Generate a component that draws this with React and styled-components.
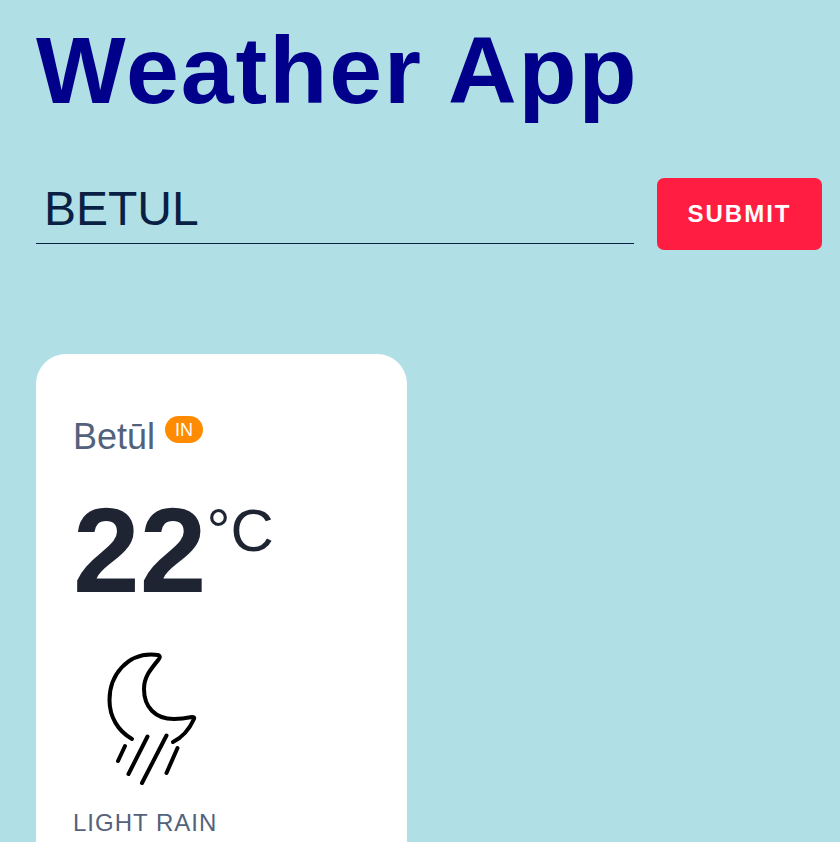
import React, { useState } from "react";
import styled, { createGlobalStyle } from "styled-components";

const GlobalStyle = createGlobalStyle`
  *, *::before, *::after { box-sizing: border-box; }
  body {
    margin: 0;
    background: #b0e0e6;
    font-family: "Liberation Sans", Arial, sans-serif;
  }
`;

const Page = styled.main`
  padding: 15px 18px 0 36px;
`;

const Title = styled.h1`
  margin: 0;
  color: #00008b;
  font-size: 95px;
  line-height: 110px;
  font-weight: 700;
  letter-spacing: 2px;
`;

const SearchForm = styled.form`
  display: flex;
  align-items: flex-end;
  gap: 23px;
  margin-top: 47px;
`;

const CityInput = styled.input`
  flex: 1;
  min-width: 0;
  height: 72px;
  margin-bottom: 6px;
  padding: 2px 8px 0;
  border: 0;
  border-bottom: 1px solid #0a1f44;
  outline: 0;
  background: transparent;
  color: #0a1f44;
  font: 48px "Liberation Sans", Arial, sans-serif;
`;

const SubmitButton = styled.button`
  min-width: 165px;
  height: 72px;
  padding: 0 28px;
  border: 0;
  border-radius: 7px;
  background: #ff1e42;
  color: #fff;
  font: 700 24px "Liberation Sans", Arial, sans-serif;
  letter-spacing: 2px;
  text-transform: uppercase;
  cursor: pointer;
`;

const CityList = styled.ul`
  display: grid;
  grid-template-columns: repeat(2, minmax(0, 1fr));
  gap: 44px;
  margin: 104px 0 0;
  padding: 0;
  list-style: none;
`;

const CityCard = styled.li`
  padding: 61px 37px 40px;
  border-radius: 30px;
  background: #fff;
`;

const CityName = styled.h2`
  display: flex;
  align-items: flex-start;
  gap: 10px;
  margin: 0;
  color: #53627c;
  font-size: 36px;
  line-height: 44px;
  font-weight: 400;
`;

const Country = styled.span`
  margin-top: 1px;
  padding: 1px 10px 0;
  border-radius: 14px;
  background: #ff8c00;
  color: #fff;
  font-size: 18px;
  line-height: 26px;
`;

const Temperature = styled.div`
  display: flex;
  align-items: flex-start;
  margin-top: 25px;
  color: #1e2432;
  font-size: 120px;
  line-height: 132px;
  font-weight: 700;
`;

const Unit = styled.sup`
  margin-top: 13px;
  font-size: 60px;
  line-height: 68px;
  font-weight: 400;
`;

const Weather = styled.figure`
  margin: 28px 0 0;
`;

const RainIcon = styled.svg`
  display: block;
  width: 150px;
  height: 150px;
`;

const Description = styled.figcaption`
  margin-top: 15px;
  color: #53627c;
  font-size: 24px;
  line-height: 28px;
  letter-spacing: 1px;
  text-transform: uppercase;
`;

export default function App() {
  const [city, setCity] = useState("BETUL");
  return (
    <>
      <GlobalStyle />
      <Page>
        <Title>Weather App</Title>
        <SearchForm onSubmit={(e) => e.preventDefault()}>
          <CityInput aria-label="City" value={city} onChange={(e) => setCity(e.target.value)} />
          <SubmitButton type="submit">Submit</SubmitButton>
        </SearchForm>
        <CityList>
          <CityCard>
            <CityName>
              Betūl <Country>IN</Country>
            </CityName>
            <Temperature>
              22<Unit>°C</Unit>
            </Temperature>
            <Weather>
              <RainIcon viewBox="73 644 150 150" fill="none" stroke="#000" strokeWidth="4" strokeLinecap="round" strokeLinejoin="round" aria-hidden="true">
                <path d="M132 739C118 731 109.500 717 109.500 700C109.500 674 128 654.500 151 654.500Q155 654.500 158 655Q161 656 159 659C150 670 144 677 144 689C144 707 155 719 174 719C181 719 187 718 192 717Q195 717 194 719C189 730 183 737 173 742" />
                <path d="M125 746L118 761M147.500 736.500L128.500 774M166.500 735.500L142 783M177.500 748L166.500 773" />
              </RainIcon>
              <Description>light rain</Description>
            </Weather>
          </CityCard>
        </CityList>
      </Page>
    </>
  );
}
